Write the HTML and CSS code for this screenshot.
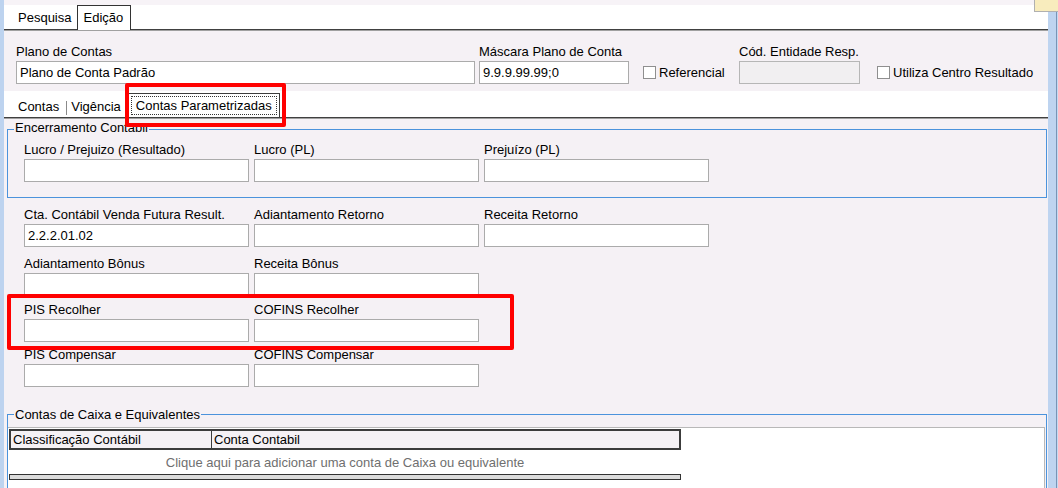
FILE: index.html
```html
<!DOCTYPE html>
<html lang="pt-BR">
<head>
<meta charset="utf-8">
<title>Plano de Contas - Edição</title>
<link rel="stylesheet" href="styles.css">
</head>
<body>
<div class="screen">
  <div class="edge-l"></div>
  <div class="main">
    <div class="tabbar">
      <span class="tab-plain">Pesquisa</span>
      <span class="tab-active">Edição</span>
    </div>
    <div class="hdr">
      <div class="field f-plano"><label class="lbl">Plano de Contas</label><input class="inp" type="text" value="Plano de Conta Padrão"></div>
      <div class="field f-mask"><label class="lbl">Máscara Plano de Conta</label><input class="inp" type="text" value="9.9.9.99.99;0"></div>
      <div class="chk-item ci-ref"><span class="chk"></span><span>Referencial</span></div>
      <div class="field f-cod"><label class="lbl">Cód. Entidade Resp.</label><input class="inp dis" type="text" value="" disabled></div>
      <div class="chk-item ci-centro"><span class="chk"></span><span>Utiliza Centro Resultado</span></div>
    </div>
    <div class="subtabs">
      <span class="stab">Contas</span>
      <span class="stab-sep"></span>
      <span class="stab">Vigência</span>
      <span class="stab-on"><span class="focus">Contas Parametrizadas</span></span>
    </div>
    <div class="content">
      <fieldset class="group g1">
        <legend class="legend">Encerramento Contabil</legend>
        <div class="g-body">
          <div class="frow">
            <div class="field"><label class="lbl">Lucro / Prejuizo (Resultado)</label><input class="inp" type="text" value=""></div>
            <div class="field"><label class="lbl">Lucro (PL)</label><input class="inp" type="text" value=""></div>
            <div class="field"><label class="lbl">Prejuízo (PL)</label><input class="inp" type="text" value=""></div>
          </div>
        </div>
      </fieldset>
      <div class="rows">
        <div class="frow r-cta">
          <div class="field"><label class="lbl">Cta. Contábil Venda Futura Result.</label><input class="inp" type="text" value="2.2.2.01.02"></div>
          <div class="field"><label class="lbl">Adiantamento Retorno</label><input class="inp" type="text" value=""></div>
          <div class="field"><label class="lbl">Receita Retorno</label><input class="inp" type="text" value=""></div>
        </div>
        <div class="frow r-bonus">
          <div class="field"><label class="lbl">Adiantamento Bônus</label><input class="inp" type="text" value=""></div>
          <div class="field"><label class="lbl">Receita Bônus</label><input class="inp" type="text" value=""></div>
        </div>
        <div class="frow r-recolher">
          <div class="field"><label class="lbl">PIS Recolher</label><input class="inp" type="text" value=""></div>
          <div class="field"><label class="lbl">COFINS Recolher</label><input class="inp" type="text" value=""></div>
        </div>
        <div class="frow r-compensar">
          <div class="field"><label class="lbl">PIS Compensar</label><input class="inp" type="text" value=""></div>
          <div class="field"><label class="lbl">COFINS Compensar</label><input class="inp" type="text" value=""></div>
        </div>
      </div>
      <fieldset class="group g2">
        <legend class="legend legend-2">Contas de Caixa e Equivalentes</legend>
        <div class="grid">
          <div class="grid-head">
            <div class="gh-col gh-1">Classificação Contábil</div>
            <div class="gh-col gh-2">Conta Contabil</div>
          </div>
          <div class="grid-add">Clique aqui para adicionar uma conta de Caixa ou equivalente</div>
          <div class="grid-bar"></div>
        </div>
      </fieldset>
    </div>
  </div>
  <div class="edge-r"></div>
  <div class="note-yellow"></div>
  <div class="mark mark-1"></div>
  <div class="mark mark-2"></div>
</div>
</body>
</html>
```

FILE: styles.css
```css
body {
  margin: 0;
  background: #f5f1f5;
}

.screen {
  position: relative;
  width: 1058px;
  height: 488px;
  overflow: hidden;
  display: flex;
  font-family: "Liberation Sans", Arial, sans-serif;
  font-size: 13px;
  line-height: 16px;
  color: #000;
  background: #f5f1f5;
}

.edge-l {
  width: 4px;
  flex: none;
  background: #bdd3ef;
}

.main {
  width: 1044px;
  flex: none;
  display: flex;
  flex-direction: column;
  background: #f5f1f5;
}

.edge-r {
  width: 10px;
  flex: none;
  background: linear-gradient(to right, #bed4f0 0, #bed4f0 8px, #7894b6 8px, #7894b6 9px, #c6daf2 9px);
}

/* top tabs */
.tabbar {
  flex: none;
  height: 24px;
  border-top: 5px solid #f7f3f7;
  border-bottom: 1px solid #404040;
  background: #fff;
  display: flex;
  align-items: flex-end;
  padding-left: 14px;
}

.tab-plain {
  padding-bottom: 3px;
  white-space: nowrap;
}

.tab-active {
  margin-left: 6px;
  margin-bottom: -1px;
  height: 25px;
  box-sizing: border-box;
  border: 1px solid #333;
  border-bottom: none;
  padding: 4px 7px 0 5px;
  background: #fff;
  white-space: nowrap;
}

/* header panel */
.hdr {
  flex: none;
  border-top: 1px solid #a0a0a0;
  padding: 13px 0 7px 12px;
  display: flex;
  align-items: flex-end;
}

.field {
  width: 225px;
  flex: none;
}

.f-plano { width: 459px; }
.f-mask { width: 150px; margin-left: 4px; }
.f-cod { width: 121px; }

.lbl {
  display: block;
  height: 16px;
  margin-bottom: 1px;
  white-space: nowrap;
}

.inp {
  display: block;
  width: 100%;
  height: 23px;
  box-sizing: border-box;
  margin: 0;
  padding: 0 3px;
  border: 1px solid #ababab;
  border-radius: 0;
  background: #fff;
  font: inherit;
  color: #000;
  outline: none;
}

.inp.dis {
  background: #f1eff1;
  border-color: #b6b6b6;
}

.chk-item {
  display: flex;
  align-items: center;
  height: 23px;
  white-space: nowrap;
  flex: none;
}

.ci-ref { width: 96px; margin-left: 14px; }
.ci-centro { margin-left: 17px; }

.chk {
  width: 13px;
  height: 13px;
  box-sizing: border-box;
  border: 1px solid #8f8f8f;
  background: #fff;
  margin-right: 3px;
  flex: none;
}

/* sub tabs */
.subtabs {
  flex: none;
  height: 26px;
  background: #fff;
  border-bottom: 1px solid #404040;
  display: flex;
  align-items: flex-end;
  padding-left: 14px;
}

.stab {
  padding-bottom: 2px;
  white-space: nowrap;
}

.stab-sep {
  width: 1px;
  height: 14px;
  background: #8a8a8a;
  margin: 0 4px 2px 7px;
}

.stab-on {
  margin-left: 7px;
  border: 1px solid #3c3c3c;
  border-bottom: none;
  padding: 2px;
  white-space: nowrap;
}

.focus {
  display: block;
  border: 1px dotted #333;
  padding: 0 4px;
  line-height: 17px;
}

/* content */
.content {
  flex: 1;
  border-top: 1px solid #a0a0a0;
  overflow: hidden;
}

.group {
  margin: 3px 1px 0 3px;
  padding: 0;
  border: 1px solid #4b93dc;
  min-width: 0;
}

.legend {
  margin-left: 6px;
  padding: 0 1px;
  height: 14px;
  line-height: 12px;
  white-space: nowrap;
}

.legend-2 {
  height: 11px;
}

.g-body {
  padding: 6px 16px 15px;
}

.frow {
  display: flex;
  gap: 5px;
}

.rows {
  padding-left: 20px;
}

.r-cta { margin-top: 9px; }
.r-bonus { margin-top: 9px; }
.r-recolher { margin-top: 6px; }
.r-compensar { margin-top: 5px; }

.g2 {
  margin-top: 22px;
}

.grid {
  margin: 7px 1px 0 0;
  height: 80px;
  background: #fff;
  border-top: 1px solid #b8b8b8;
  border-right: 1px solid #b8b8b8;
  padding: 1px 0 0 1px;
}

.grid-head {
  width: 672px;
  height: 21px;
  box-sizing: border-box;
  border: 2px solid #3c3c3c;
  background: #f5f1f5;
  display: flex;
}

.gh-col {
  line-height: 17px;
  padding-left: 2px;
  white-space: nowrap;
}

.gh-1 {
  width: 198px;
  border-right: 1px solid #3c3c3c;
}

.gh-2 {
  flex: 1;
}

.grid-add {
  width: 672px;
  height: 22px;
  box-sizing: border-box;
  padding-top: 3px;
  line-height: 19px;
  text-align: center;
  color: #6f6f6f;
  white-space: nowrap;
}

.grid-bar {
  width: 672px;
  height: 6px;
  box-sizing: border-box;
  margin-top: 2px;
  border: 1px solid #333;
  background: #dcdcdc;
}

/* overlays */
.note-yellow {
  position: absolute;
  top: 0;
  right: 0;
  width: 23px;
  height: 11px;
  background: #f8ecbd;
  border-left: 1px solid #b0b0b0;
  border-bottom: 1px solid #b0b0b0;
}

.mark {
  position: absolute;
  box-sizing: border-box;
  border: 4px solid #f00;
  border-radius: 2px;
  pointer-events: none;
}

.mark-1 {
  left: 125px;
  top: 83px;
  width: 161px;
  height: 44px;
}

.mark-2 {
  left: 7px;
  top: 294px;
  width: 507px;
  height: 56px;
}
```
